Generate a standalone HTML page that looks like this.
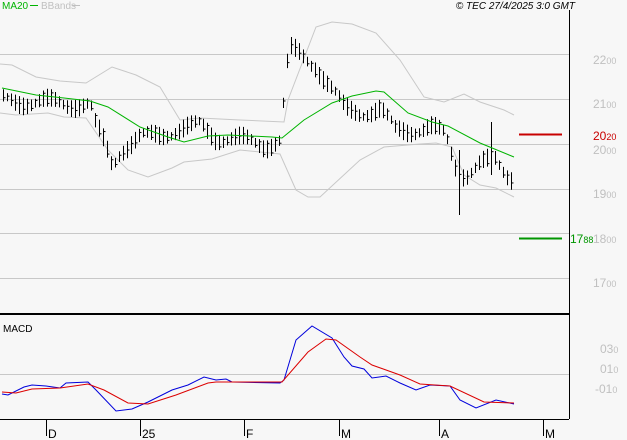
<!DOCTYPE html>
<html><head><meta charset="utf-8"><style>
html,body{margin:0;padding:0;background:#f7f7f7;}
svg{display:block;font-family:"Liberation Sans",sans-serif;}
</style></head><body>
<svg id="s" width="627" height="440" viewBox="0 0 627 440" xmlns="http://www.w3.org/2000/svg">
<rect width="627" height="440" fill="#f7f7f7"/>
<g stroke="#c8c8c8" stroke-width="1">
<line x1="0" y1="54.5" x2="569" y2="54.5"/>
<line x1="0" y1="99.5" x2="569" y2="99.5"/>
<line x1="0" y1="144.5" x2="569" y2="144.5"/>
<line x1="0" y1="189.5" x2="569" y2="189.5"/>
<line x1="0" y1="233.5" x2="569" y2="233.5"/>
<line x1="0" y1="278.5" x2="569" y2="278.5"/>
<line x1="0" y1="374.5" x2="569" y2="374.5"/>
</g>
<g fill="none" stroke="#c8c8c8" stroke-width="1">
<polyline points="0,64 12,65 36,77 60,81 86,83 112,67 136,75 160,87 180,120 200,118 240,120 284,122 288,100 316,27 332,22 352,24 376,33 400,60 424,97 444,102 464,94 480,102 504,110 514,115"/>
<polyline points="0,113 16,115 48,113 64,117 86,118 108,150 128,170 148,177 172,168 184,162 212,159 240,150 280,154 296,190 308,197 320,197 360,160 384,147 420,144 436,143 452,147 464,175 480,185 496,188 514,197"/>
</g>
<g id="bars" stroke="#000" stroke-width="1"></g>
<polyline fill="none" stroke="#00b400" stroke-width="1" points="2,88 36,95 64,98 90,101 108,107 140,127 168,137 184,142 208,136 228,135 272,137 282,138 304,120 332,103 352,96 376,91 384,92 408,113 432,122 448,126 480,143 514,157"/>
<line x1="519" y1="134.5" x2="562" y2="134.5" stroke="#c80000" stroke-width="2"/>
<line x1="519" y1="238.5" x2="562" y2="238.5" stroke="#009600" stroke-width="2"/>
<g fill="#c0c0c0" font-size="12">
<text x="593" y="64">22<tspan font-size="9">00</tspan></text>
<text x="593" y="108">21<tspan font-size="9">00</tspan></text>
<text x="593" y="154">20<tspan font-size="9">00</tspan></text>
<text x="593" y="198">19<tspan font-size="9">00</tspan></text>
<text x="593" y="243">18<tspan font-size="9">00</tspan></text>
<text x="593" y="287">17<tspan font-size="9">00</tspan></text>
<text x="600" y="353">03<tspan font-size="9">0</tspan></text>
<text x="600" y="373">01<tspan font-size="9">0</tspan></text>
<text x="595" y="393">-01<tspan font-size="9">0</tspan></text>
</g>
<text x="593" y="140" fill="#c80000" font-size="12">20<tspan font-size="9">20</tspan></text>
<text x="570" y="243" fill="#009600" font-size="12">17<tspan font-size="9">88</tspan></text>
<line x1="0" y1="314" x2="569" y2="314" stroke="#000" stroke-width="2"/>
<line x1="569.5" y1="10" x2="569.5" y2="419" stroke="#000"/>
<line x1="0" y1="419.5" x2="569" y2="419.5" stroke="#000"/>
<g stroke="#000"><line x1="46.5" y1="420" x2="46.5" y2="436"/><line x1="140.5" y1="420" x2="140.5" y2="436"/><line x1="244.5" y1="420" x2="244.5" y2="436"/><line x1="339.5" y1="420" x2="339.5" y2="436"/><line x1="439.5" y1="420" x2="439.5" y2="436"/><line x1="543.5" y1="420" x2="543.5" y2="436"/></g>
<g font-size="12" fill="#000"><text x="48" y="438">D</text><text x="142" y="438">25</text><text x="246" y="438">F</text><text x="341" y="438">M</text><text x="441" y="438">A</text><text x="545" y="438">M</text></g>
<text x="3" y="332" font-size="10" fill="#000">MACD</text>
<polyline fill="none" stroke="#0000dc" stroke-width="1" points="2,394 8,395 24,387 32,385 46,386 60,388 66,383 88,382 96,390 116,411 132,409 148,402 172,390 188,385 204,377 216,380 226,379 232,382 280,383 284,380 296,340 312,326 332,338 344,357 352,366 364,369 372,378 386,376 400,383 416,390 430,385 450,386 460,400 476,408 496,400 514,404"/>
<polyline fill="none" stroke="#dc0000" stroke-width="1" points="2,392 16,393 32,389 60,388 88,384 104,390 128,403 148,404 176,395 208,383 216,382 282,382 308,352 326,339 336,340 360,357 372,365 400,375 420,384 450,386 484,402 514,403"/>
<text x="2" y="9" font-size="10" fill="#00b400">MA20</text>
<line x1="30" y1="5.5" x2="38" y2="5.5" stroke="#00b400"/>
<text x="41" y="9" font-size="10" fill="#c0c0c0">BBands</text>
<line x1="72" y1="5.5" x2="80" y2="5.5" stroke="#c0c0c0"/>
<text x="575" y="9" font-size="10" font-style="italic" fill="#000" text-anchor="end">© TEC 27/4/2025 3:0 GMT</text>
</svg>
<script>
var P=[[3,100],[30,102],[60,103],[90,105],[95,125],[105,145],[112,165],[120,150],[140,138],[160,135],[175,130],[190,128],[200,125],[215,137],[240,140],[265,145],[280,140],[286,70],[290,50],[300,55],[315,65],[325,80],[335,95],[345,110],[360,112],[380,110],[395,130],[410,130],[430,128],[445,135],[455,165],[465,175],[480,165],[495,160],[505,172],[514,178]];
function f(x){for(var i=0;i<P.length-1;i++){if(x<=P[i+1][0]){var t=(x-P[i][0])/(P[i+1][0]-P[i][0]);return P[i][1]+t*(P[i+1][1]-P[i][1]);}}return P[P.length-1][1];}
var g=document.getElementById('bars'),h='';
for(var x=3;x<=514;x+=4){var m=f(x)+Math.sin(x*1.7)*5;var r=8+Math.abs(Math.sin(x*0.9))*10;
var hi=m-r/2,lo=m+r/2;if(x==459){hi=150;lo=215;}if(x==491){hi=122;lo=175;}
var xx=x+0.5;h+='<line x1="'+xx+'" y1="'+hi+'" x2="'+xx+'" y2="'+lo+'"/>';
var c=m+Math.sin(x*2.3)*r/3;h+='<line x1="'+xx+'" y1="'+c+'" x2="'+(xx+2)+'" y2="'+c+'"/>';}
g.innerHTML=h;
</script>
</body></html>
